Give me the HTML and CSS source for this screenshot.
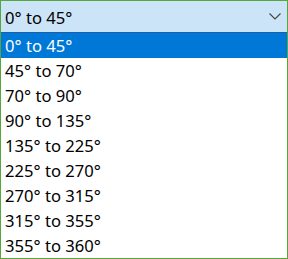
FILE: index.html
```html
<!DOCTYPE html>
<html lang="en">
<head>
  <meta charset="UTF-8" />
  <title>Angle range</title>
  <link rel="stylesheet" href="styles.css">
</head>
<body>

  <div class="combo">
    <div class="combo-head">
      <span class="combo-value">0° to 45°</span>
      <svg class="chevron" width="12" height="7" viewBox="0 0 12 7">
        <path d="M0.5 0.5 L6 6 L11.5 0.5" fill="none" stroke="#444" stroke-width="1.1"/>
      </svg>
    </div>

    <ul class="combo-list">
      <li class="selected">0° to 45°</li>
      <li>45° to 70°</li>
      <li>70° to 90°</li>
      <li>90° to 135°</li>
      <li>135° to 225°</li>
      <li>225° to 270°</li>
      <li>270° to 315°</li>
      <li>315° to 355°</li>
      <li>355° to 360°</li>
    </ul>
  </div>

</body>
</html>
```

FILE: styles.css
```css
body {
  margin: 0;
  font-family: 'Noto Sans', 'Open Sans', sans-serif;
  font-size: 16.6px;
  color: #000;
  background: #fff;
}

.combo {
  width: 288px;
  height: 259px;
  box-sizing: border-box;
  border: 1px solid #55a63b;
  display: flex;
  flex-direction: column;
}

.combo-head {
  height: 31px;
  background: #cce4f7;
  display: flex;
  align-items: center;
  justify-content: space-between;
  padding: 1px 6px 0 4px;
  box-sizing: border-box;
}

.chevron {
  margin-bottom: 1px;
}

.combo-list {
  list-style: none;
  margin: 0;
  padding: 0;
  border-top: 1px solid #1d5fa8;
}

.combo-list li {
  height: 25px;
  line-height: 26px;
  padding-left: 4px;
}

.combo-list li.selected {
  background: #0078d7;
  color: #fff;
}
```
